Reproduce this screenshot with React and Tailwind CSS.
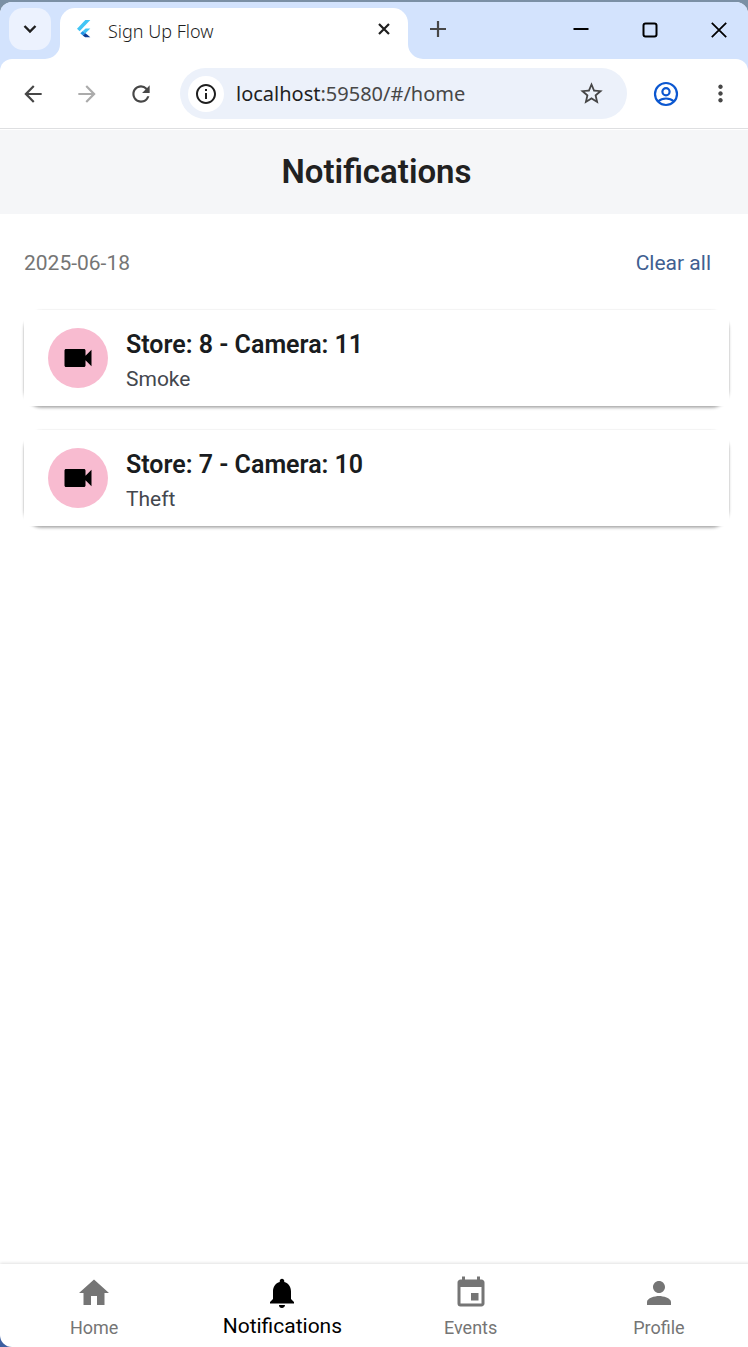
import React from "react";
import {
  MdHome,
  MdNotifications,
  MdEvent,
  MdPerson,
  MdVideocam,
  MdArrowBack,
  MdArrowForward,
  MdRefresh,
  MdInfoOutline,
  MdStarOutline,
  MdMoreVert,
} from "react-icons/md";

const notifications = [
  { id: 1, title: "Store: 8 - Camera: 11", kind: "Smoke" },
  { id: 2, title: "Store: 7 - Camera: 10", kind: "Theft" },
];

const tabs = [
  { label: "Home", Icon: MdHome },
  { label: "Notifications", Icon: MdNotifications, active: true },
  { label: "Events", Icon: MdEvent },
  { label: "Profile", Icon: MdPerson },
];

function FlutterLogo() {
  return (
    <svg viewBox="0 0 24 24" className="size-6 shrink-0" aria-hidden="true">
      <path d="M13.300 2H18.300L7.600 13.200 5 10.800z" fill="#42c5f5" />
      <path d="M13.600 10.500h4.700L13.500 15.300 10.800 13z" fill="#42c5f5" />
      <path d="M10.800 13l2.700 2.300L10.800 17.600 8.300 15.200z" fill="#2196e8" />
      <path d="M10.800 17.600l2.700-2.300L18.300 19.300h-5.200z" fill="#0d3c94" />
    </svg>
  );
}

function TabStrip() {
  return (
    <div className="flex h-[57px] items-start bg-[#d3e3fd]">
      <button
        aria-label="Search tabs"
        className="mt-1.5 ml-[9px] flex size-[42px] shrink-0 items-center justify-center rounded-[14px] bg-[#ecf2fe]"
      >
        <svg viewBox="0 0 14 14" className="size-3.5" fill="none" stroke="#1f1f1f" strokeWidth="2.400">
          <path d="M1.500 4L7 9.500l5.500-5.500" />
        </svg>
      </button>
      <div className="relative mt-1.5 ml-[9px] flex h-[51px] w-[348px] items-start rounded-t-[15px] bg-white pt-2.5 pr-4 pl-3">
        <svg viewBox="0 0 15 15" className="absolute bottom-0 -left-[15px] size-[15px]" aria-hidden="true">
          <path d="M15 0v15H0A15 15 0 0 0 15 0z" fill="#fff" />
        </svg>
        <svg viewBox="0 0 15 15" className="absolute -right-[15px] bottom-0 size-[15px]" aria-hidden="true">
          <path d="M0 0v15h15A15 15 0 0 1 0 0z" fill="#fff" />
        </svg>
        <FlutterLogo />
        <span className="ml-3 flex-1 font-['Noto_Sans',sans-serif] text-[18px] leading-[26px] font-light text-[#1f1f1f]">
          Sign Up Flow
        </span>
        <button aria-label="Close tab" className="flex h-[22px] w-4 items-center justify-center">
          <svg viewBox="0 0 12 12" className="size-3" stroke="#1f1f1f" strokeWidth="2.200">
            <path d="M1 1l10 10M11 1L1 11" />
          </svg>
        </button>
      </div>
      <button aria-label="New tab" className="mt-[15px] ml-5 flex h-6 w-5 items-center justify-center">
        <svg viewBox="0 0 16 16" className="size-4" stroke="#474747" strokeWidth="2.200">
          <path d="M8 0v16M0 8h16" />
        </svg>
      </button>
      <div className="ml-auto flex shrink-0 pr-[19px]">
        <button aria-label="Minimize" className="mt-4 flex h-6 w-5 items-center justify-center">
          <svg viewBox="0 0 16 16" className="size-4" stroke="#000" strokeWidth="2">
            <path d="M0.500 7h15" />
          </svg>
        </button>
        <button aria-label="Maximize" className="mt-4 ml-[49px] flex h-6 w-5 items-center justify-center">
          <svg viewBox="0 0 16 16" className="size-4" fill="none" stroke="#000" strokeWidth="2">
            <rect x="1.500" y="1.500" width="13" height="13" rx="2" />
          </svg>
        </button>
        <button aria-label="Close window" className="mt-4 ml-[49px] flex h-6 w-5 items-center justify-center">
          <svg viewBox="0 0 16 16" className="size-4" stroke="#000" strokeWidth="1.800">
            <path d="M0.800 0.800l14.400 14.400M15.200 0.800L0.800 15.200" />
          </svg>
        </button>
      </div>
    </div>
  );
}

function Toolbar() {
  return (
    <div className="bg-[#d3e3fd]">
      <div className="flex h-[70px] items-center rounded-t-xl border-b border-[#dedfe1] bg-white pr-3.5 pl-5 text-[#474747]">
        <button aria-label="Back" className="shrink-0">
          <MdArrowBack className="size-[26px]" />
        </button>
        <button aria-label="Forward" className="ml-7 shrink-0 text-[#ababab]">
          <MdArrowForward className="size-[26px]" />
        </button>
        <button aria-label="Reload" className="ml-7 shrink-0">
          <MdRefresh className="size-[26px]" />
        </button>
        <div className="ml-[26px] flex h-[51px] min-w-0 flex-1 items-center rounded-full bg-[#ecf1fa] pr-[22px] pl-2">
          <button
            aria-label="Site information"
            className="flex size-9 shrink-0 items-center justify-center rounded-full bg-white text-[#1f1f1f]"
          >
            <MdInfoOutline className="size-6" />
          </button>
          <div className="relative ml-3 min-w-0 flex-1 font-['Noto_Sans',sans-serif] text-[20px] leading-7">
            <input
              aria-label="Address"
              defaultValue="localhost:59580/#/home"
              className="w-full bg-transparent text-[#474747] outline-none"
            />
            <span aria-hidden="true" className="pointer-events-none absolute top-0 left-0 bg-[#ecf1fa] text-[#1f1f1f]">
              localhost
            </span>
          </div>
          <button aria-label="Bookmark this page" className="shrink-0">
            <MdStarOutline className="size-[27px]" />
          </button>
        </div>
        <button aria-label="Account" className="ml-[26px] shrink-0">
          <svg viewBox="0 0 26 26" className="size-[26px]" fill="none" stroke="#0b57d0" strokeWidth="2.200">
            <circle cx="13" cy="13" r="11" />
            <circle cx="13" cy="10.800" r="3.600" />
            <path d="M5 20.500c4.500-4 11.500-4 16 0" />
          </svg>
        </button>
        <button aria-label="Browser menu" className="ml-7 shrink-0">
          <MdMoreVert className="size-[27px]" />
        </button>
      </div>
    </div>
  );
}

function NotificationCard({ title, kind }) {
  return (
    <li className="rounded-[18px] shadow-[0_2px_3px_rgba(0,0,0,0.3),0_0_2px_rgba(0,0,0,0.12)]">
      <div className="flex h-24 items-center gap-[18px] bg-white px-6">
        <span className="flex size-[60px] shrink-0 items-center justify-center rounded-full bg-[#f8bbd0] text-black">
          <MdVideocam className="size-9" />
        </span>
        <div className="pt-1.5">
          <h2 className="text-[25px] leading-9 font-semibold text-[#191c20]">{title}</h2>
          <p className="text-[21px] leading-8 text-[#44474e]">{kind}</p>
        </div>
      </div>
    </li>
  );
}

export default function App() {
  return (
    <div className="bg-linear-to-b from-[#7b90a5] to-[#3c5ea0] pt-0.5 font-[Roboto,sans-serif]">
      <div className="flex min-h-[calc(100vh-2px)] flex-col overflow-hidden rounded-t-xl rounded-bl-xl bg-white">
        <TabStrip />
        <Toolbar />
        <div className="mt-px -mr-[5px] flex flex-1 flex-col">
          <header className="flex h-[84px] items-center justify-center bg-[#f5f6f8]">
            <h1 className="text-[33px] leading-10 font-semibold text-[#212121]">Notifications</h1>
          </header>
          <main className="flex-1 px-6 pt-[30px]">
            <div className="flex items-center justify-between pr-[18px] text-[21px] leading-[38px]">
              <time dateTime="2025-06-18" className="text-[#757575]">
                2025-06-18
              </time>
              <button className="text-[#415f91]">Clear all</button>
            </div>
            <ul className="mt-7 flex flex-col gap-6">
              {notifications.map((item) => (
                <NotificationCard key={item.id} title={item.title} kind={item.kind} />
              ))}
            </ul>
          </main>
          <nav className="grid h-[83px] grid-cols-4 shadow-[0_-1px_3px_rgba(0,0,0,0.12)]">
            {tabs.map(({ label, Icon, active }) => (
              <a
                key={label}
                href={"#" + label.toLowerCase()}
                aria-current={active ? "page" : undefined}
                className={
                  active
                    ? "flex flex-col items-center pt-[11px] text-[21px] leading-[30px] text-black"
                    : "flex flex-col items-center pt-[11px] text-[18px] leading-[34px] text-[#757575]"
                }
              >
                <Icon className="size-9 shrink-0" />
                {label}
              </a>
            ))}
          </nav>
        </div>
      </div>
    </div>
  );
}
